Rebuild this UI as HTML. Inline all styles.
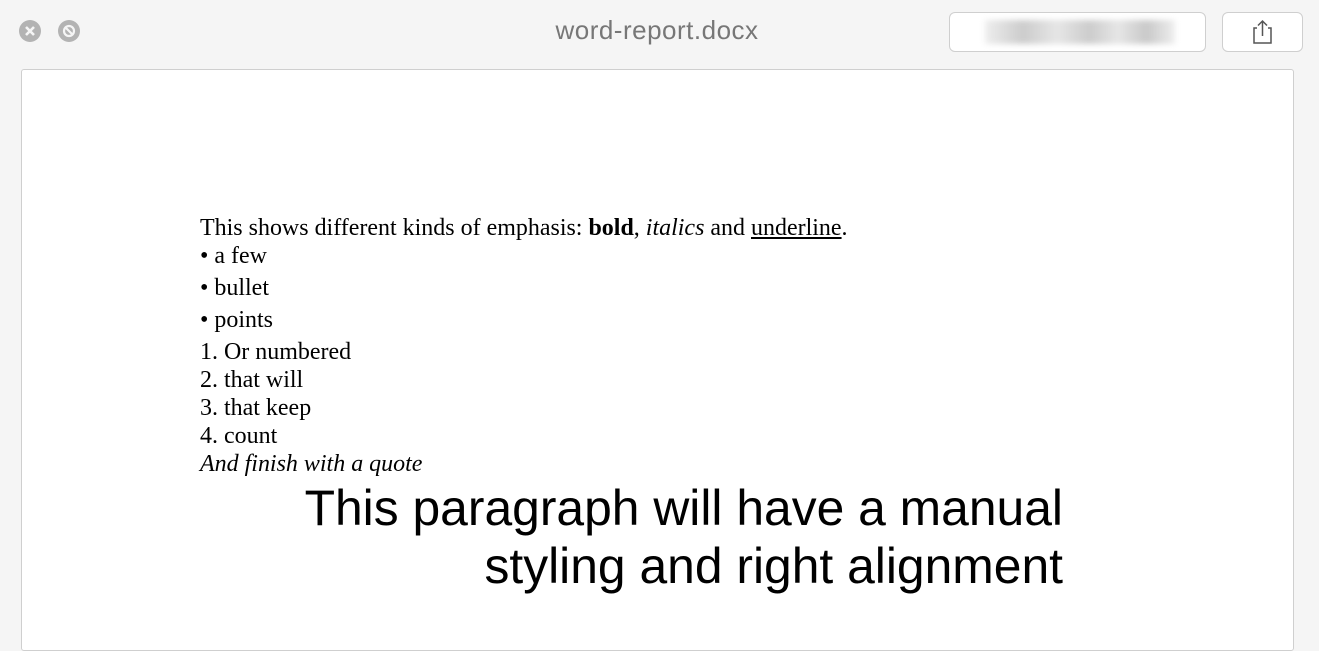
<!DOCTYPE html>
<html><head><style>
body{margin:0;width:1319px;height:628px;background:#f5f5f5;overflow:hidden;position:relative;font-family:"Liberation Sans",sans-serif}
.title{position:absolute;left:0;width:1314px;top:15px;text-align:center;font-size:26px;color:#777;letter-spacing:0.5px}
.circ{position:absolute;top:20px;width:22px;height:22px;border-radius:50%;background:#b3b3b3;}
.btn{position:absolute;top:12px;height:38px;border:1px solid #cfcfcf;border-radius:6px;background:#fff;}
.page{position:absolute;left:21px;top:69px;width:1271px;height:580px;background:#fff;border:1px solid #cfcfcf;border-radius:3px;}
.doc{position:absolute;left:200px;top:214px;font-family:"Liberation Serif",serif;font-size:24px;color:#000;line-height:28px;transform:scaleX(0.999);transform-origin:left top}
.doc .b{line-height:32px}
.big{position:absolute;right:256px;top:479px;text-align:right;font-size:49.8px;line-height:58px;color:#000}
</style></head><body>
<div class="circ" style="left:19px"><svg width="22" height="22"><path d="M7 7L15 15M15 7L7 15" stroke="#f5f5f5" stroke-width="2.6"/></svg></div>
<div class="circ" style="left:58px"><svg width="22" height="22"><circle cx="11" cy="11" r="5" stroke="#f5f5f5" stroke-width="2.2" fill="none"/><path d="M7.5 7.5L14.5 14.5" stroke="#f5f5f5" stroke-width="2.2"/></svg></div>
<div class="title">word-report.docx</div>
<div class="btn" style="left:949px;width:255px"><div style="position:absolute;left:35px;top:7px;width:190px;height:24px;background:linear-gradient(90deg,#eee,#ccc 20%,#e6e6e6 38%,#ccc 55%,#e6e6e6 70%,#c9c9c9 85%,#eee);filter:blur(3px)"></div></div>
<div class="btn" style="left:1222px;width:79px"><svg width="79" height="38"><path d="M34 15H31V30H48V15H45" stroke="#555" stroke-width="1.5" fill="none"/><path d="M39.5 23V8M35 12.5L39.5 8L44 12.5" stroke="#555" stroke-width="1.5" fill="none"/></svg></div>
<div class="page"></div>
<div class="doc">
<div>This shows different kinds of emphasis: <b>bold</b>, <i>italics</i> and <u>underline</u>.</div>
<div class="b" style="margin-top:-2px">• a few</div>
<div class="b">• bullet</div>
<div class="b">• points</div>
<div style="margin-top:2px">1. Or numbered</div>
<div>2. that will</div>
<div>3. that keep</div>
<div>4. count</div>
<div><i>And finish with a quote</i></div>
</div>
<div class="big">This paragraph will have a manual<br>styling and right alignment</div>
</body></html>
